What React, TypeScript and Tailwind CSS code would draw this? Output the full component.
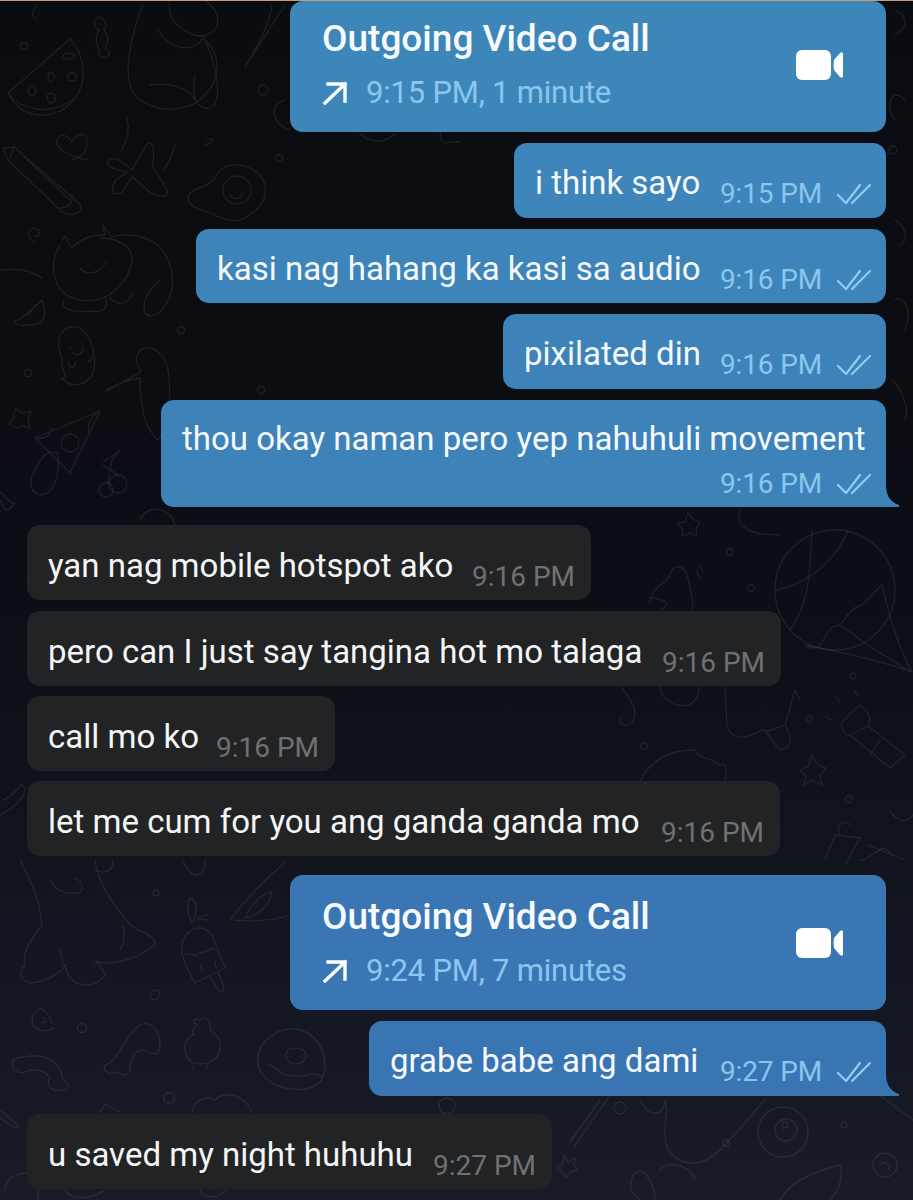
const font = { fontFamily: 'Roboto, sans-serif' };

function Doodles() {
  return (
    <svg viewBox="0 0 913 1200" className="absolute inset-0 w-[913px] h-[1200px]" fill="none" stroke="#fff" strokeOpacity="0.08" strokeWidth="1.3" strokeLinecap="round" strokeLinejoin="round">
      {/* top left */}
      <path d="M8 93 L70 39 C86 56 88 85 72 102 C55 120 22 122 8 93Z M8 93 C20 110 50 116 72 100" />
      <ellipse cx="69" cy="56" rx="6" ry="3" /><ellipse cx="51" cy="77" rx="3" ry="5" /><ellipse cx="72" cy="77" rx="5" ry="4" /><ellipse cx="32" cy="91" rx="4" ry="5" /><ellipse cx="51" cy="98" rx="4" ry="5" />
      <circle cx="24" cy="46" r="3.5" /><path d="M38 5 C31 10 31 17 37 19" />
      <path d="M99 17 C92 20 94 28 99 30 C95 38 95 46 100 49 C96 55 102 59 108 57 C111 53 108 49 105 49 C109 42 108 34 104 30 C108 25 105 19 99 17Z" />
      <path d="M143 4 C128 45 120 85 140 100 C160 114 190 112 205 95 C220 80 222 55 205 40 M170 0 C165 20 185 35 200 36 C220 35 225 15 205 0 M158 30 C170 50 195 55 205 35 M150 85 C170 82 190 88 195 100 M195 75 C190 100 200 112 212 107 C222 100 218 70 205 40" />
      <path d="M245 67 L285 5 M245 67 C255 50 270 25 272 5" />
      <circle cx="263" cy="90" r="5" /><path d="M290 130 C272 125 268 105 285 100" /><circle cx="279" cy="158" r="3.5" />
      <path d="M88 160 C72 158 52 148 58 138 C63 132 70 138 72 142 C75 134 88 130 87 142 C87 150 84 156 72 160" />
      <path d="M3 148 L14 147 L80 204 C84 212 74 218 62 212 L8 160Z M14 147 L10 158 M24 157 L70 200 M60 208 C68 208 74 202 72 194" />
      <path d="M108 160 C118 155 125 165 132 170 L146 145 C152 138 156 150 152 165 L167 190 C170 198 160 198 150 192 L132 177 L122 192 C112 198 110 188 116 180 L128 172 C118 170 104 168 108 160Z M127 118 C130 130 128 140 122 150 M175 145 C172 155 168 165 163 170" />
      <path d="M207 140 C217 136 212 146 205 144" />
      <path d="M225 167 C240 160 262 170 265 185 C268 200 258 210 248 216 C238 224 225 220 215 215 C205 210 188 208 188 198 C188 188 205 190 215 178 C218 172 220 170 225 167Z" />
      <circle cx="237" cy="190" r="14" /><path d="M230 195 C234 200 240 200 242 194" />
      <path d="M35 235 C42 240 40 228 33 228 C26 232 28 240 35 242" />
      <path d="M62 240 L65 236 L72 248 C85 234 100 235 105 235 L103 225 L111 237 C125 233 160 232 170 265 C178 290 165 315 150 316 C140 314 142 295 160 280 M60 245 C48 265 52 295 80 300 C110 305 130 280 132 260 C133 245 115 238 100 238" />
      <path d="M80 268 C86 276 100 274 106 262 M64 300 C60 312 75 312 100 311 C108 310 107 300 105 298 M110 298 C118 306 130 305 132 292" />
      <path d="M0 270 C20 268 30 270 42 278" />
      <path d="M14 322 C22 318 30 312 42 300 C48 315 44 325 30 325 C22 326 16 326 14 322Z M28 315 L36 305" />
      {/* middle left */}
      <path d="M62 378 C70 380 60 368 62 358 C52 335 66 322 80 328 C96 340 98 370 90 378 C80 388 68 386 62 378Z" />
      <path d="M70 347 L71 349 M82 347 L83 349 M72 352 C76 356 80 355 83 351 M68 362 C70 370 74 368 76 362 M88 362 C90 360 92 362 92 356" />
      <circle cx="28" cy="373" r="3.5" /><circle cx="181" cy="330" r="3.5" /><circle cx="261" cy="390" r="3.5" />
      <path d="M106 390 C132 378 135 375 141 372 C137 365 135 360 137 355 C145 340 165 350 168 370 C172 395 168 425 158 440 C146 430 140 410 140 378 C125 380 115 385 106 392" />
      <path d="M9 424 L14 418 L15 408 L22 413 L31 411 L28 419 L30 428 L22 426 L17 428Z" />
      <path d="M35 438 L100 411 L70 473 L35 438Z M35 438 C45 440 50 436 52 428 M100 411 C92 415 85 425 90 435" />
      <circle cx="70" cy="443" r="9" />
      <path d="M42 458 C30 475 25 490 40 495 C55 495 60 470 58 458 C60 450 48 450 42 458" />
      <circle cx="106" cy="490" r="7" /><circle cx="118" cy="484" r="9" /><path d="M108 483 L112 460 M118 475 L103 465 M103 462 L118 452 M112 460 L120 450" />
      <path d="M0 500 C5 510 5 515 15 503 C10 505 5 495 0 492" />
      <path d="M140 520 C145 505 170 505 175 525" />
      {/* right top bits */}
      <path d="M895 10 C905 15 912 25 895 35 M905 100 C890 85 885 110 895 120" />
      <circle cx="893" cy="150" r="4" /><path d="M895 220 C905 225 910 240 900 245" />
      <path d="M895 300 C905 295 912 310 905 330 M892 380 C902 390 910 410 905 420" />
      <path d="M440 132 C442 150 445 140 460 142 M360 134 C375 145 385 142 395 134" />
      {/* right balloon */}
      <circle cx="835" cy="590" r="60" />
      <path d="M776 590 C800 585 830 570 848 531 M812 530 C810 560 812 600 790 630" />
      <path d="M882 585 C875 590 870 598 862 605 C850 608 845 620 840 625 C828 625 825 640 820 645 C815 650 808 648 805 645 M805 645 C830 650 880 660 912 672 M840 625 C860 640 890 660 912 672 M882 585 C890 620 900 650 912 672" />
      <circle cx="853" cy="676" r="3" />
      <path d="M854 690 L857 695 M836 697 L840 703 M826 717 L832 720" />
      <path d="M841 723 L859 705 C868 710 872 718 868 726 L850 735 C845 735 842 730 841 723Z M868 726 L905 755 L890 768 L850 735 M880 740 L870 755" />
      <circle cx="849" cy="799" r="3.5" />
      <path d="M800 770 L808 767 L812 755 L818 765 L826 768 L820 775 L822 785 L812 780 L804 785 L806 776Z" />
      <path d="M677 523 L685 522 L688 513 L694 520 L700 522 L696 529 L697 536 L689 533 L682 536 L683 529Z" />
      <circle cx="730" cy="552" r="3.5" /><circle cx="751" cy="588" r="3.5" /><circle cx="644" cy="746" r="3.5" /><circle cx="809" cy="719" r="3" />
      <path d="M650 602 C650 588 665 585 670 575 C672 562 685 565 688 578 C690 590 695 605 692 610 M660 610 C670 606 670 600 652 598 M696 570 L700 578 M700 565 L703 572" />
      <path d="M740 510 C736 525 745 535 780 535" />
      <path d="M620 685 C630 700 640 710 632 722 C625 730 615 722 622 716 M660 685 C660 700 675 708 690 705 C700 695 700 690 698 685" />
      <path d="M725 685 L727 727 C735 745 752 735 762 730 C768 733 775 728 785 725 L795 690 L800 700 M765 730 L778 748 C785 752 792 745 790 735 L785 725" />
      <path d="M640 782 C650 760 670 750 695 750 C700 760 705 755 720 765 C730 760 725 780 725 782" />
      <path d="M825 860 L835 835 L860 838 L845 865 M840 835 C835 825 845 818 850 825 M860 860 C870 860 875 850 885 848 L892 855 M868 845 L905 860 M890 810 C895 820 905 825 913 815" />
      {/* dino and left bottom */}
      <path d="M2 800 C10 800 25 780 22 785 C30 790 20 805 0 815" />
      <path d="M20 860 C30 880 40 900 42 925 C30 940 22 955 25 965 C18 972 20 980 30 983 C45 982 60 975 65 965 C70 990 95 990 105 975 C100 965 100 965 95 962 C115 965 135 960 155 945 C155 935 145 935 130 925 C115 905 100 890 95 860" />
      <path d="M50 880 C55 890 65 895 80 893 C85 885 80 880 75 878 M120 950 C125 942 125 930 122 925 M65 965 C60 960 62 955 60 950 M95 870 C105 875 115 870 112 860" />
      <path d="M183 860 C190 880 205 880 205 860" />
      <path d="M230 920 C245 900 265 880 285 862 M235 920 C255 922 275 920 290 915 M245 918 C250 905 260 895 272 892 C270 905 260 915 245 918Z" />
      <circle cx="156" cy="893" r="3" />
      <path d="M192 922 C185 912 188 898 192 898 C197 905 198 915 192 922 M198 918 L208 914 M198 919 L207 920" />
      <path d="M183 940 C190 925 205 925 212 935 L225 968 L195 983 C188 970 178 955 183 940Z M185 955 C190 950 195 960 200 952 C205 955 210 945 217 950 M200 965 L202 970 M215 962 L216 968 M210 976 L218 990 C222 995 226 990 222 982 L218 972" />
      <circle cx="155" cy="995" r="5" />
      <path d="M52 1023 C45 1005 35 1005 32 1020 C32 1030 45 1034 54 1028 M44 1018 C48 1020 45 1024 42 1022" />
      <circle cx="82" cy="1028" r="4.5" /><circle cx="169" cy="1098" r="5.5" />
      <path d="M105 1065 C120 1060 125 1035 140 1025 C150 1020 160 1030 160 1045 C160 1055 155 1055 148 1052 C135 1045 130 1060 130 1070 C125 1080 118 1072 118 1072 C110 1076 102 1072 105 1065Z" />
      <path d="M197 1025 C190 1020 195 1018 200 1020 C205 1015 212 1020 210 1030 C222 1035 225 1055 210 1062 C195 1068 185 1060 185 1048 C185 1040 190 1035 195 1035 C190 1032 193 1028 197 1025 M193 1070 L193 1066 M207 1068 L207 1064" />
      <path d="M13 1060 C20 1055 25 1058 30 1056 C45 1055 60 1060 63 1080 C72 1085 68 1092 60 1090 C52 1092 45 1085 50 1078 C45 1070 35 1068 25 1072 C18 1075 10 1068 13 1060Z" />
      <path d="M258 1060 C258 1040 280 1025 300 1030 C320 1035 330 1060 322 1080 C310 1095 280 1090 268 1080 C262 1075 258 1070 258 1060Z M288 1050 C280 1060 295 1070 305 1060 C310 1050 298 1045 288 1050Z M268 1065 C278 1065 282 1080 295 1075 C305 1080 315 1068 322 1078" />
      <path d="M0 1110 L18 1125 C20 1128 15 1128 12 1126 L0 1118 M100 1113 L105 1104 L120 1112 M192 1112 C195 1100 205 1095 215 1100 C225 1090 245 1095 252 1112" />
      <path d="M5 1190 C5 1175 25 1170 38 1175 L38 1200 M65 1190 C70 1200 90 1200 105 1190 M200 1190 C205 1200 220 1198 225 1190" />
      {/* right bottom */}
      <circle cx="447" cy="1106" r="8" />
      <path d="M574 1147 L610 1095 M570 1142 L600 1100" />
      <circle cx="620" cy="1108" r="6" /><circle cx="785" cy="1125" r="3" /><circle cx="726" cy="1143" r="3" /><circle cx="844" cy="1125" r="3" />
      <path d="M640 1100 C650 1120 665 1115 665 1100 C670 1112 660 1130 668 1150 C680 1165 700 1170 720 1150 C740 1130 755 1110 765 1100 M660 1170 C670 1160 690 1165 695 1180" />
      <circle cx="783" cy="1132" r="25" /><circle cx="786" cy="1130" r="11" />
      <path d="M564 1155 L568 1162 L575 1158 L574 1165 L578 1170 L570 1172 L566 1178 L562 1172 L557 1168 L563 1163Z" />
      <circle cx="885" cy="1165" r="12" /><path d="M880 1165 C885 1160 892 1165 888 1170" />
      <path d="M780 1200 C790 1180 820 1170 840 1165 C845 1180 835 1195 830 1200 M640 1200 C625 1190 630 1175 640 1170 C650 1175 655 1190 655 1200" />
      <path d="M880 1095 L913 1120" />
    </svg>
  );
}

function Checks() {
  return (
    <svg viewBox="0 0 34 22" className="w-[34px] h-[22px]" fill="none" stroke="#92ccf2" strokeWidth="2.2" strokeLinecap="round" strokeLinejoin="round">
      <path d="M1 12 L9 20 L23 2" />
      <path d="M15 20 L33 2" />
    </svg>
  );
}

function Tail({ className }: { className: string }) {
  return (
    <svg viewBox="0 0 16 22" className="absolute right-[-14px] bottom-0 w-[16px] h-[22px]">
      <path className={className} d="M0 0 L2 0 C2 10 6 17 15 20 Q16 22 14 22 L0 22Z" />
    </svg>
  );
}

function OutMsg({ text, time, bg, w, tail, tailFill, h = 'h-[75px]', mt }: { text: string; time?: string; bg: string; w: string; tail?: boolean; tailFill?: string; h?: string; mt: string }) {
  return (
    <div className={`flex justify-end pr-[27px] ${mt}`}>
      <div className={`relative flex justify-between pl-[21px] pr-[15px] rounded-[13px] ${tail ? 'rounded-br-none' : ''} ${bg} ${w} ${h}`}>
        <span className="text-[33px] leading-[40px] pt-[20px] text-[#f5f9fc] whitespace-nowrap">{text}</span>
        <div className="flex items-center gap-[15px] pt-[32px] h-[69px] self-start">
          <span className="text-[28px] leading-[32px] tracking-[-0.15px] text-[#8ac6ee]">{time}</span>
          <Checks />
        </div>
        {tail && <Tail className={tailFill || ''} />}
      </div>
    </div>
  );
}

function InMsg({ text, time, w, mt }: { text: string; time: string; w: string; mt: string }) {
  return (
    <div className={`flex pl-[27px] ${mt}`}>
      <div className={`flex justify-between pl-[21px] pr-[16px] h-[75px] rounded-[13px] bg-[#222325] ${w}`}>
        <span className="text-[33px] leading-[40px] pt-[21px] text-[#f4f5f6] whitespace-nowrap">{text}</span>
        <span className="text-[28px] leading-[32px] pt-[36px] text-[#707173] whitespace-nowrap">{time}</span>
      </div>
    </div>
  );
}

function CallCard({ time, bg, h, pt, mt }: { time: string; bg: string; h: string; pt: string; mt: string }) {
  return (
    <div className={`flex justify-end pr-[27px] ${mt}`}>
      <div className={`flex items-center justify-between w-[596px] pl-[32px] pr-[43px] rounded-[13px] ${bg} ${h} ${pt}`}>
        <div>
          <div className="text-[37px] leading-[44px] font-medium text-[#f6fafd] whitespace-nowrap">Outgoing Video Call</div>
          <div className="flex items-center gap-[18px] mt-[12px]">
            <svg viewBox="0 0 26 24" className="w-[26px] h-[24px]" fill="none" stroke="#fff" strokeWidth="3.4" strokeLinecap="square">
              <path d="M3 22 L23 3 M6 3 L23 3 L23 20" />
            </svg>
            <span className="text-[31px] leading-[40px] tracking-[-0.2px] text-[#8ac6ee] whitespace-nowrap">{time}</span>
          </div>
        </div>
        <svg viewBox="0 0 47 30" className="w-[47px] h-[30px]" fill="#fff">
          <rect x="0" y="0" width="35" height="30" rx="6" />
          <path d="M38 10 L44 3 Q47 1 47 4 L47 26 Q47 29 44 27 L38 20 Q37 15 38 10Z" />
        </svg>
      </div>
    </div>
  );
}

export default function App() {
  return (
    <div className="relative w-[913px] h-[1200px] overflow-hidden bg-gradient-to-b from-[#0b0c11] via-[#0c0e15] to-[#171c28]" style={font}>
      <Doodles />
      <div className="relative">
        <div className="h-[1px] bg-[#c29c72]" />
        <CallCard time="9:15 PM, 1 minute" bg="bg-[#3d86ba]" h="h-[131px]" pt="pb-[4px]" mt="mt-0" />
        <OutMsg text="i think sayo" time="9:15 PM" bg="bg-[#3d85ba]" w="w-[372px]" mt="mt-[11px]" />
        <OutMsg text="kasi nag hahang ka kasi sa audio" time="9:16 PM" bg="bg-[#3d84ba]" w="w-[690px]" h="h-[74px]" mt="mt-[11px]" />
        <OutMsg text="pixilated din" time="9:16 PM" bg="bg-[#3d83b9]" w="w-[383px]" mt="mt-[11px]" />
        <div className="flex justify-end pr-[27px] mt-[11px]">
          <div className="relative w-[725px] h-[107px] pl-[21px] pr-[15px] rounded-[13px] rounded-br-none bg-[#3d82b9]">
            <div className="text-[33px] leading-[40px] pt-[19px] text-[#f5f9fc] whitespace-nowrap">thou okay naman pero yep nahuhuli movement</div>
            <div className="flex justify-end items-center gap-[15px] mt-[9px]">
              <span className="text-[28px] leading-[32px] tracking-[-0.15px] text-[#8ac6ee]">9:16 PM</span>
              <Checks />
            </div>
            <Tail className="fill-[#3d82b9]" />
          </div>
        </div>
        <InMsg text="yan nag mobile hotspot ako" time="9:16 PM" w="w-[564px]" mt="mt-[18px]" />
        <InMsg text="pero can I just say tangina hot mo talaga" time="9:16 PM" w="w-[754px]" mt="mt-[11px]" />
        <InMsg text="call mo ko" time="9:16 PM" w="w-[308px]" mt="mt-[10px]" />
        <InMsg text="let me cum for you ang ganda ganda mo" time="9:16 PM" w="w-[753px]" mt="mt-[10px]" />
        <CallCard time="9:24 PM, 7 minutes" bg="bg-[#3a76b4]" h="h-[135px]" pt="pt-0" mt="mt-[19px]" />
        <OutMsg text="grabe babe ang dami" time="9:27 PM" bg="bg-[#3a75b3]" w="w-[517px]" tail tailFill="fill-[#3a75b3]" mt="mt-[11px]" />
        <InMsg text="u saved my night huhuhu" time="9:27 PM" w="w-[525px]" mt="mt-[18px]" />
      </div>
    </div>
  );
}
